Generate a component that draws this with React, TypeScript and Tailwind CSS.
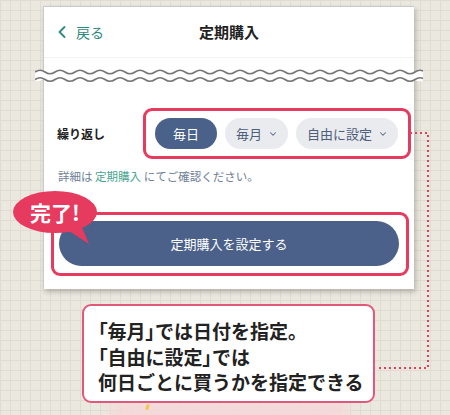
import { ChevronLeft, ChevronDown } from 'lucide-react';

const FONT = '"Noto Sans CJK JP", "Noto Sans", sans-serif';

const WAVE_W = 388;
const PERIOD = 20;

function waveForward(y: number) {
  let d = `M0,${y}`;
  for (let x = 0; x < WAVE_W; x += PERIOD) {
    d += ` Q${x + PERIOD / 4},${y - 3.5} ${x + PERIOD / 2},${y} Q${x + (3 * PERIOD) / 4},${y + 3.5} ${x + PERIOD},${y}`;
  }
  return d;
}

function waveBack(y: number) {
  let d = '';
  for (let x = WAVE_W; x > 0; x -= PERIOD) {
    d += ` Q${x - PERIOD / 4},${y + 3.5} ${x - PERIOD / 2},${y} Q${x - (3 * PERIOD) / 4},${y - 3.5} ${x - PERIOD},${y}`;
  }
  return d;
}

// Torn-page divider: two wavy strokes with a white band between them.
function WaveCut() {
  const top = waveForward(5);
  const bottom = waveForward(12.5);
  return (
    <svg width={WAVE_W} height={19} viewBox={`0 0 ${WAVE_W} 19`} className="absolute left-[35px] top-[67px]">
      <path d={`${top} V12.5 ${waveBack(12.5)} Z`} fill="#ffffff" />
      <path d={top} fill="none" stroke="#767676" strokeWidth={1.6} />
      <path d={bottom} fill="none" stroke="#767676" strokeWidth={1.6} />
    </svg>
  );
}

function Chip({ label, active, menu }: { label: string; active?: boolean; menu?: boolean }) {
  return (
    <div
      className={
        active
          ? 'flex h-[31px] items-center justify-center rounded-full bg-[#4a6189] px-[18px] text-[13px] text-white'
          : 'flex h-[31px] items-center justify-center gap-[6px] rounded-full bg-[#e9ebef] pl-[11px] pr-[10px] text-[13px] text-[#4d5d7a]'
      }
    >
      <span>{label}</span>
      {menu ? <ChevronDown size={10} strokeWidth={2.5} className="text-[#5a6a86]" /> : null}
    </div>
  );
}

// Corner brackets set proportionally so they hug the word they enclose.
function Br({ children }: { children: string }) {
  return <span className="[font-feature-settings:'palt']">{children}</span>;
}

export default function App() {
  return (
    <div
      className="relative h-[415px] w-[450px] overflow-hidden bg-[#ebe8df] bg-[linear-gradient(#e0dcd1_1px,transparent_1px),linear-gradient(90deg,#e0dcd1_1px,transparent_1px)] bg-[size:10px_10px] pt-[6px]"
      style={{ fontFamily: FONT }}
    >
      {/* phone screen */}
      <div className="ml-[43px] h-[283px] w-[371px] border-t border-l border-[#c9c9c9] bg-white shadow-[2px_3px_5px_rgba(0,0,0,0.22)]">
        <div className="relative flex h-[50px] items-center">
          <div className="flex items-center pl-[8px] text-[#2e8a7d]">
            <ChevronLeft size={20} strokeWidth={2.2} />
            <span className="ml-[4px] text-[14px]">戻る</span>
          </div>
          <div className="absolute inset-x-0 text-center text-[15px] font-bold text-[#222]">定期購入</div>
        </div>
        <div className="h-px bg-[#f2f2f2]" />

        <div className="mt-[50px] flex items-center pl-[13px]">
          <div className="w-[86px] text-[12px] font-bold text-[#222]">繰り返し</div>
          <div className="flex gap-[8px] rounded-[9px] border-[3px] border-[#e63a5e] py-[7px] pl-[9px] pr-[10px]">
            <Chip label="毎日" active />
            <Chip label="毎月" menu />
            <Chip label="自由に設定" menu />
          </div>
        </div>

        <p className="mt-[10px] pl-[14px] text-[11.5px] leading-[14px] text-[#6f8097]">
          詳細は <span className="text-[#4aa592]">定期購入</span> にてご確認ください。
        </p>

        <div className="ml-[7px] mt-[29px] w-[358px] rounded-[9px] border-[3px] border-[#e63a5e] pb-[7px] pl-[5px] pr-[7px] pt-[6px]">
          <button className="flex h-[45px] w-full items-center justify-center rounded-full bg-[#4b6189] text-[13px] text-white">
            定期購入を設定する
          </button>
        </div>
      </div>

      {/* note */}
      <div className="relative z-10 ml-[82px] mt-[15px] w-[293px] rounded-[9px] border-2 border-[#e2587a] bg-white pb-[6px] pl-[14px] pt-[12px] text-[19px] font-bold leading-[25.5px] text-[#222]">
        <p>
          <Br>「</Br>毎月<Br>」</Br>では日付を指定。
        </p>
        <p>
          <Br>「</Br>自由に設定<Br>」</Br>では
        </p>
        <p>何日ごとに買うかを指定できる</p>
      </div>
      <div className="absolute left-[110px] top-[400px] h-[20px] w-[240px] rounded-full bg-[#f4d9d9] blur-[6px]" />
      <div className="absolute left-[146px] top-[404px] h-[6px] w-[3px] rotate-[20deg] rounded-full bg-[#f2c94c]" />

      <WaveCut />

      {/* dotted leader from the options to the note */}
      <svg width={450} height={415} className="pointer-events-none absolute left-0 top-0">
        <path d="M410,133 H428 V368 H376" fill="none" stroke="#e2405f" strokeWidth={2} strokeDasharray="2 3" />
      </svg>

      {/* 完了! speech bubble */}
      <div className="absolute left-[13px] top-[191px] h-[56px] w-[88px]">
        <svg width={88} height={56} className="absolute left-0 top-0">
          <ellipse cx={42} cy={21} rx={42} ry={21} fill="#e63a5e" />
          <path d="M50,36 L68,34 L76,53 Z" fill="#e63a5e" />
        </svg>
        <div className="absolute left-0 top-[6px] w-[84px] text-center text-[21px] font-bold leading-[30px] text-white">
          完了!
        </div>
      </div>
    </div>
  );
}
